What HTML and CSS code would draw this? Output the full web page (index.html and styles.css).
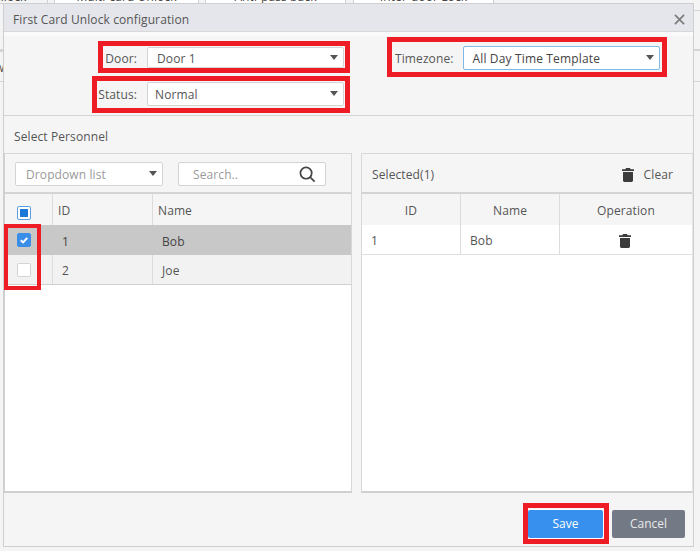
FILE: index.html
```html
<!DOCTYPE html>
<html lang="en">
<head>
<meta charset="utf-8">
<title>First Card Unlock configuration</title>
<link rel="stylesheet" href="styles.css">
</head>
<body>
<div class="backdrop">
  <div class="tab tab-a">Unlock</div>
  <div class="tab tab-b">Multi-card Unlock</div>
  <div class="tab tab-c">Anti-pass back</div>
  <div class="tab tab-d">Inter-door Lock</div>
  <div class="edge-line edge-left-a"></div>
  <div class="edge-text">w</div>
  <div class="edge-line edge-left-b"></div>
  <div class="edge-line edge-right-a"></div>
  <div class="edge-line edge-right-b"></div>
  <div class="edge-line edge-right-c"></div>
</div>
<main class="dialog">
  <header class="title-bar">
    <span>First Card Unlock configuration</span>
    <svg class="close" viewBox="0 0 12 12"><path d="M1 1l10 10M11 1L1 11"/></svg>
  </header>
  <section class="form">
    <div class="form-col form-left">
      <div class="field field-door">
        <label>Door:</label>
        <div class="select select-door"><span>Door 1</span><i class="caret"></i></div>
      </div>
      <div class="field field-status">
        <label>Status:</label>
        <div class="select select-status"><span>Normal</span><i class="caret"></i></div>
      </div>
    </div>
    <div class="form-col form-right">
      <div class="field">
        <label>Timezone:</label>
        <div class="select select-zone"><span>All Day Time Template</span><i class="caret"></i></div>
      </div>
    </div>
  </section>
  <div class="section-title">Select Personnel</div>
  <section class="panels">
    <div class="panel panel-left">
      <div class="toolbar">
        <div class="select select-list"><span>Dropdown list</span><i class="caret"></i></div>
        <div class="search">
          <span>Search..</span>
          <svg viewBox="0 0 18 18"><circle cx="7.5" cy="7.5" r="6"/><path d="M12 12l4.5 4.5"/></svg>
        </div>
      </div>
      <div class="row row-head left-cols">
        <div class="cell cell-check cell-check-head"><b class="check check-partial"><i></i></b></div>
        <div class="cell cell-head">ID</div>
        <div class="cell cell-head">Name</div>
      </div>
      <div class="row row-selected left-cols">
        <div class="cell cell-check"><b class="check check-on"><svg viewBox="0 0 10 10"><path d="M1.8 5.2l2.3 2.2 4.2-4.6"/></svg></b></div>
        <div class="cell cell-pad">1</div>
        <div class="cell cell-pad">Bob</div>
      </div>
      <div class="row row-plain left-cols">
        <div class="cell cell-check"><b class="check"></b></div>
        <div class="cell cell-pad">2</div>
        <div class="cell cell-pad">Joe</div>
      </div>
    </div>
    <div class="panel panel-right">
      <div class="toolbar toolbar-right">
        <span>Selected(1)</span>
        <div class="clear">
          <svg class="trash" viewBox="0 0 12 14"><path d="M4 0h4l.6 1.2H12v1.8H0V1.2h3.4zM1 4h10v8.6c0 .8-.6 1.4-1.4 1.4H2.4C1.600 14 1 13.400 1 12.600z"/></svg>
          <span>Clear</span>
        </div>
      </div>
      <div class="row row-head right-cols">
        <div class="cell cell-center">ID</div>
        <div class="cell cell-center">Name</div>
        <div class="cell cell-center">Operation</div>
      </div>
      <div class="row row-white right-cols">
        <div class="cell cell-start">1</div>
        <div class="cell cell-start">Bob</div>
        <div class="cell cell-center cell-op"><svg class="trash" viewBox="0 0 12 14"><path d="M4 0h4l.6 1.2H12v1.8H0V1.2h3.4zM1 4h10v8.6c0 .8-.6 1.4-1.4 1.4H2.4C1.600 14 1 13.400 1 12.600z"/></svg></div>
      </div>
    </div>
  </section>
  <footer class="footer">
    <button class="btn btn-save">Save</button>
    <button class="btn btn-cancel">Cancel</button>
  </footer>
</main>
<div class="mark mark-door"></div>
<div class="mark mark-status"></div>
<div class="mark mark-zone"></div>
<div class="mark mark-checks"></div>
<div class="mark mark-save"></div>
</body>
</html>
```

FILE: styles.css
```css
* { box-sizing: border-box; }
html, body { margin: 0; height: 100%; }
body {
  width: 700px;
  height: 551px;
  position: relative;
  overflow: hidden;
  background: #f4f4f4;
  padding: 3px 6px 4px 3px;
  font-family: "Open Sans", "Noto Sans", sans-serif;
  font-size: 12px;
  letter-spacing: .1px;
  color: #555;
}

/* page behind the dialog */
.backdrop { position: absolute; inset: 0; overflow: hidden; }
.tab {
  position: absolute;
  top: -9px;
  height: 13px;
  background: #fff;
  border: 1px solid #d0d0d0;
  line-height: 9px;
  font-size: 12px;
  text-align: center;
  color: #444;
}
.tab-a { left: -34px; width: 82px; background: #f4f4f4; }
.tab-b { left: 54px; width: 145px; }
.tab-c { left: 205px; width: 141px; }
.tab-d { left: 353px; width: 141px; }
.edge-line { position: absolute; height: 1px; background: #d4d4d4; }
.edge-text { position: absolute; left: -5px; top: 59px; font-size: 12px; color: #555; }
.edge-left-a { left: 0; width: 3px; top: 49px; height: 3px; }
.edge-left-b { left: 0; width: 3px; top: 81px; }
.edge-right-a { right: 0; width: 6px; top: 10px; }
.edge-right-b { right: 0; width: 6px; top: 49px; height: 2px; }
.edge-right-c { right: 0; width: 6px; top: 81px; }

/* dialog */
.dialog {
  position: relative;
  width: 691px;
  height: 544px;
  display: flex;
  flex-direction: column;
  background: #f5f5f5;
  border: 1px solid #cfcfcf;
}
.title-bar {
  height: 28px;
  flex: none;
  display: flex;
  align-items: center;
  justify-content: space-between;
  padding: 3px 8px 0 9px;
  background: #e4e6eb;
  border-bottom: 1px solid #d8d8d8;
  color: #555;
  font-size: 12px;
}
.close { width: 11px; height: 11px; fill: none; stroke: #7d7d7d; stroke-width: 1.8; }

/* top form */
.form {
  flex: none;
  height: 84px;
  padding-top: 4px;
  display: flex;
  border-top: 4px solid #fafafa;
  border-bottom: 1px solid #d4d4d4;
}
.form-col { display: flex; flex-direction: column; }
.form-left { width: 340px; padding-top: 7px; gap: 14px; align-items: flex-end; }
.form-right { margin-left: 51px; padding-top: 6px; }
.field { display: flex; align-items: center; gap: 10px; }
.field-door label { padding-top: 2px; }
.field label { color: #555; font-size: 12px; white-space: nowrap; }
.select {
  position: relative;
  display: flex;
  align-items: center;
  height: 24px;
  background: #fff;
  border: 1px solid #d4d4d4;
  border-radius: 2px;
  color: #555;
  font-size: 12px;
}
.caret {
  position: absolute;
  right: 5px;
  top: 50%;
  margin-top: -3px;
  width: 0;
  height: 0;
  border-left: 4.500px solid transparent;
  border-right: 4.500px solid transparent;
  border-top: 5px solid #555;
}
.select-door { width: 197px; height: 21px; padding: 1px 0 0 9px; }
.select-status { width: 197px; padding-left: 7px; }
.select-zone { width: 197px; padding-left: 8px; border-color: #82b8e6; color: #444; letter-spacing: .15px; }
.select-list { width: 148px; padding: 2px 0 0 10px; color: #9a9a9a; }

.section-title { flex: none; height: 37px; padding: 13px 0 0 10px; color: #555; font-size: 12px; line-height: 16px; }

/* panels */
.panels { flex: 1; display: flex; gap: 9px; min-height: 0; }
.panel {
  display: flex;
  flex-direction: column;
  background: #fff;
  border-top: 1px solid #d8d8d8;
  border-bottom: 2px solid #d0d0d0;
}
.panel-left { width: 348px; border-right: 1px solid #d8d8d8; border-left: 1px solid #d0d0d0; }
.panel-right { flex: 1; border-left: 1px solid #d8d8d8; border-right: 1px solid #e4e4e4; }
.toolbar {
  height: 40px;
  flex: none;
  display: flex;
  align-items: center;
  gap: 15px;
  padding: 1px 10px 0;
  background: #f5f5f5;
  border-bottom: 2px solid #d4d4d4;
}
.toolbar-right { justify-content: space-between; padding: 3px 19px 0 10px; }
.clear { display: flex; align-items: center; gap: 10px; }
.search {
  width: 148px;
  height: 24px;
  display: flex;
  align-items: center;
  justify-content: space-between;
  padding: 2px 9px 0 14px;
  background: #fff;
  border: 1px solid #d4d4d4;
  border-radius: 2px;
  color: #9a9a9a;
}
.search svg { width: 17px; height: 17px; fill: none; stroke: #444; stroke-width: 1.800; }
.trash { width: 12px; height: 14px; fill: #3c3c3c; display: block; }

.row { display: grid; flex: none; height: 30px; border-bottom: 1px solid #e0e0e0; }
.left-cols { grid-template-columns: 48px 100px 1fr; }
.right-cols { grid-template-columns: 99px 99px 1fr; }
.cell { display: flex; align-items: center; padding-top: 2px; border-right: 1px solid #dcdcdc; }
.cell:last-child { border-right: 0; }
.row-head { height: 31px; background: #f5f5f5; border-bottom: 0; }
.cell-head { padding-left: 5px; }
.cell-check { justify-content: center; padding: 0 10px 0 0; }
.cell-check-head { padding-top: 7px; }
.cell-pad { padding-left: 9px; }
.cell-center { justify-content: center; }
.cell-op { padding-right: 3px; }
.cell-start { padding-left: 9px; }
.row-selected { background: #c8c8c8; border-bottom: 0; color: #444; }
.row-selected .cell { border-right-color: #c8c8c8; }
.row-plain { background: #f2f2f2; border-bottom: 1px solid #d0d0d0; }
.row-white { background: #fff; }

.check {
  display: flex;
  align-items: center;
  justify-content: center;
  width: 14px;
  height: 14px;
  background: #fff;
  border: 1px solid #d4d4d4;
  border-radius: 2px;
}
.check-partial { border-color: #5aa0e6; }
.check-partial i { width: 8px; height: 8px; background: #1a78d8; }
.check-on { background: #3a8ee8; border-color: #3a8ee8; }
.check-on svg { width: 10px; height: 10px; fill: none; stroke: #fff; stroke-width: 2; }

/* footer */
.footer {
  flex: none;
  height: 53px;
  display: flex;
  justify-content: flex-end;
  align-items: center;
  gap: 9px;
  padding: 8px 8px 0 0;
}
.btn {
  height: 28px;
  border: 0;
  border-radius: 2px;
  font-family: inherit;
  font-size: 12px;
  color: #fff;
}
.btn-save { width: 75px; background: #3790ee; box-shadow: 0 0 0 1px #fff; }
.btn-cancel { width: 73px; background: #737a85; color: #e8e8e8; }

/* red annotation frames drawn over the screenshot */
.mark { position: absolute; border: 5px solid #ee1c25; }
.mark-door { left: 98px; top: 41px; width: 252px; height: 32px; }
.mark-status { left: 92px; top: 76px; width: 258px; height: 37px; }
.mark-zone { left: 387px; top: 37px; width: 280px; height: 40px; }
.mark-checks { left: 4px; top: 224px; width: 37px; height: 66px; border-width: 4px; }
.mark-save { left: 523px; top: 503px; width: 86px; height: 41px; }
```
